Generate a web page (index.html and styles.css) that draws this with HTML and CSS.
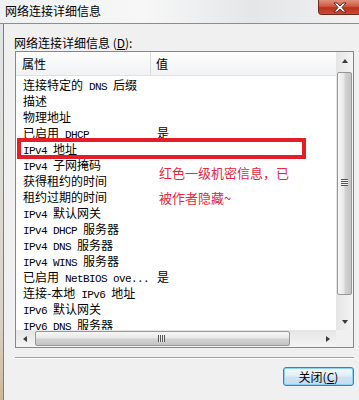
FILE: index.html
```html
<!DOCTYPE html>
<html lang="zh-CN">
<head>
    <meta charset="UTF-8">
    <title>网络连接详细信息</title>
    <link rel="stylesheet" href="styles.css">
</head>
<body>
    <div class="window">
        <div class="titlebar">
            <span class="title">网络连接详细信息</span>
            <div class="close">
                <svg width="16" height="11" viewBox="0 0 16 11">
                    <path d="M2 1 L5 1 L8 4 L11 1 L14 1 L10 5.5 L14 10 L11 10 L8 7 L5 10 L2 10 L6 5.5 Z" fill="#fff" stroke="#5a2a24" stroke-width="1"/>
                </svg>
            </div>
        </div>
        <div class="frame">
            <div class="client">
                <div class="label">网络连接详细信息 (<u>D</u>):</div>
                <div class="listbox">
                    <div class="list">
                        <div class="header">
                            <div class="col-name">属性</div>
                            <div class="col-value">值</div>
                        </div>
                        <div class="rows">
                            <div class="row"><span>连接特定的<i class="en"> DNS </i>后缀</span><span></span></div>
                            <div class="row"><span>描述</span><span></span></div>
                            <div class="row"><span>物理地址</span><span></span></div>
                            <div class="row"><span>已启用<i class="en"> DHCP</i></span><span>是</span></div>
                            <div class="row"><span><i class="en">IPv4 </i>地址</span><span></span></div>
                            <div class="row"><span><i class="en">IPv4 </i>子网掩码</span><span></span></div>
                            <div class="row"><span>获得租约的时间</span><span></span></div>
                            <div class="row"><span>租约过期的时间</span><span></span></div>
                            <div class="row"><span><i class="en">IPv4 </i>默认网关</span><span></span></div>
                            <div class="row"><span><i class="en">IPv4 DHCP </i>服务器</span><span></span></div>
                            <div class="row"><span><i class="en">IPv4 DNS </i>服务器</span><span></span></div>
                            <div class="row"><span><i class="en">IPv4 WINS </i>服务器</span><span></span></div>
                            <div class="row"><span>已启用<i class="en"> NetBIOS ove...</i></span><span>是</span></div>
                            <div class="row"><span>连接-本地<i class="en"> IPv6 </i>地址</span><span></span></div>
                            <div class="row"><span><i class="en">IPv6 </i>默认网关</span><span></span></div>
                            <div class="row"><span><i class="en">IPv6 DNS </i>服务器</span><span></span></div>
                        </div>
                        <div class="mark"></div>
                        <p class="note">红色一级机密信息，已<br>被作者隐藏~</p>
                    </div>
                    <div class="vscroll">
                        <div class="btn arrow-up"></div>
                        <div class="thumb-v"></div>
                        <div class="fill"></div>
                        <div class="btn arrow-down"></div>
                    </div>
                    <div class="hscroll">
                        <div class="btn arrow-left"></div>
                        <div class="thumb-h"></div>
                        <div class="fill"></div>
                        <div class="btn arrow-right"></div>
                    </div>
                    <div class="corner"></div>
                </div>
                <div class="sep"></div>
                <div class="actions">
                    <button class="close-btn">关闭(<u>C</u>)</button>
                </div>
            </div>
        </div>
    </div>
</body>
</html>
```

FILE: styles.css
```css
* {
    margin: 0;
    padding: 0;
    box-sizing: border-box;
}
body {
    width: 359px;
    height: 400px;
    overflow: hidden;
    background-color: #f0f0f0;
    font-family: "Noto Sans CJK SC", "Liberation Sans", sans-serif;
    font-size: 12px;
    color: #000;
}
.window {
    width: 361px;
    height: 400px;
    display: flex;
    flex-direction: column;
}
.titlebar {
    height: 24px;
    display: flex;
    align-items: flex-start;
    background: linear-gradient(90deg, #eef0f2 0%, #f7f7f7 40%, #e4e6e8 70%, #f1f1f1 100%);
    border-bottom: 1px solid #8d8d8d;
}
.title {
    padding: 3px 0 0 5px;
    line-height: 15px;
    font-size: 12px;
}
.close {
    margin-left: auto;
    width: 43px;
    height: 15px;
    border: 1px solid #6b2b22;
    border-top: none;
    border-radius: 0 0 4px 4px;
    background: linear-gradient(#e0907f 0%, #cf5a42 45%, #b9321c 55%, #cc4a30 100%);
    display: flex;
    justify-content: center;
    align-items: center;
}
.frame {
    flex: 1;
    padding-left: 3px;
    background: linear-gradient(#e2e4e6, #d8d2c6 80%, #cdb898);
}
.client {
    height: 100%;
    background-color: #f0f0f0;
    border-left: 1px solid #7e7e7e;
    padding: 11px 0 0 11px;
}
.label {
    line-height: 16px;
    margin-left: -1px;
}
.listbox {
    width: 339px;
    height: 297px;
    border: 1px solid #828790;
    background-color: #fff;
    display: grid;
    grid-template-columns: 320px 17px;
    grid-template-rows: 278px 17px;
}
.list {
    position: relative;
    overflow: hidden;
}
.header {
    display: flex;
    height: 24px;
    background: linear-gradient(#fdfdfd, #f1f2f4);
    border-bottom: 1px solid #e0e1e3;
    line-height: 23px;
    font-size: 12px;
}
.col-name {
    width: 135px;
    padding-left: 6px;
    border-right: 1px solid #dadbdc;
}
.col-value {
    padding-left: 5px;
}
.rows {
    padding-top: 1px;
}
.row {
    display: flex;
    height: 16px;
    line-height: 16px;
    white-space: nowrap;
}
.row span:first-child {
    width: 135px;
    padding-left: 7px;
}
.row span:last-child {
    padding-left: 6px;
}
.en {
    font-style: normal;
    font-family: "Liberation Mono", monospace;
    font-size: 11px;
    letter-spacing: -0.6px;
    white-space: pre;
}
.mark {
    position: absolute;
    left: 1px;
    top: 86px;
    width: 289px;
    height: 21px;
    border: 4px solid #e51d28;
}
.note {
    position: absolute;
    left: 143px;
    top: 108px;
    font-size: 13px;
    line-height: 25px;
    color: #e8263c;
    white-space: nowrap;
}
.vscroll {
    display: flex;
    flex-direction: column;
    background: linear-gradient(90deg, #e5e5e5, #f4f4f4);
}
.hscroll {
    display: flex;
    background: linear-gradient(#e5e5e5, #f4f4f4);
}
.corner {
    background-color: #f0f0f0;
}
.fill {
    flex: 1;
}
.btn {
    position: relative;
    width: 17px;
    height: 17px;
    flex: none;
}
.btn::after {
    content: "";
    position: absolute;
    left: 50%;
    top: 50%;
    width: 0;
    height: 0;
}
.arrow-up::after {
    margin: -2px 0 0 -3px;
    border-left: 3px solid transparent;
    border-right: 3px solid transparent;
    border-bottom: 4px solid #3a3a3a;
}
.arrow-down::after {
    margin: -2px 0 0 -3px;
    border-left: 3px solid transparent;
    border-right: 3px solid transparent;
    border-top: 4px solid #3a3a3a;
}
.arrow-left::after {
    margin: -3px 0 0 -2px;
    border-top: 3px solid transparent;
    border-bottom: 3px solid transparent;
    border-right: 4px solid #3a3a3a;
}
.arrow-right::after {
    margin: -3px 0 0 -2px;
    border-top: 3px solid transparent;
    border-bottom: 3px solid transparent;
    border-left: 4px solid #3a3a3a;
}
.thumb-v {
    position: relative;
    margin: 3px 1px 0 1px;
    height: 223px;
    border: 1px solid #979797;
    border-radius: 2px;
    background: linear-gradient(90deg, #f6f6f6, #e8e8e8 45%, #d2d2d2 55%, #c4c4c4);
}
.thumb-v::after {
    content: "";
    position: absolute;
    left: 3px;
    right: 3px;
    top: 106px;
    height: 7px;
    background: repeating-linear-gradient(#555 0 1px, #eee 1px 2px);
}
.thumb-h {
    position: relative;
    margin: 1px 0 1px 2px;
    width: 255px;
    border: 1px solid #979797;
    border-radius: 2px;
    background: linear-gradient(#f6f6f6, #e8e8e8 45%, #d2d2d2 55%, #c4c4c4);
}
.thumb-h::after {
    content: "";
    position: absolute;
    top: 3px;
    bottom: 3px;
    left: 122px;
    width: 7px;
    background: repeating-linear-gradient(90deg, #555 0 1px, #eee 1px 2px);
}
.sep {
    width: 339px;
    margin-top: 9px;
    border-top: 1px solid #a0a0a0;
    border-bottom: 1px solid #fff;
}
.actions {
    width: 339px;
    margin-top: 8px;
    display: flex;
    justify-content: flex-end;
}
.close-btn {
    width: 71px;
    height: 19px;
    border: 1px solid #3c7fb1;
    border-radius: 3px;
    background: linear-gradient(#f2f8fc, #e3eef7 45%, #cde3f3 55%, #c4dcef);
    box-shadow: inset 0 0 0 1px #8fd0f3;
    font-family: "Noto Sans CJK SC", "Liberation Sans", sans-serif;
    font-size: 12px;
    line-height: 16px;
    color: #000;
}
```
